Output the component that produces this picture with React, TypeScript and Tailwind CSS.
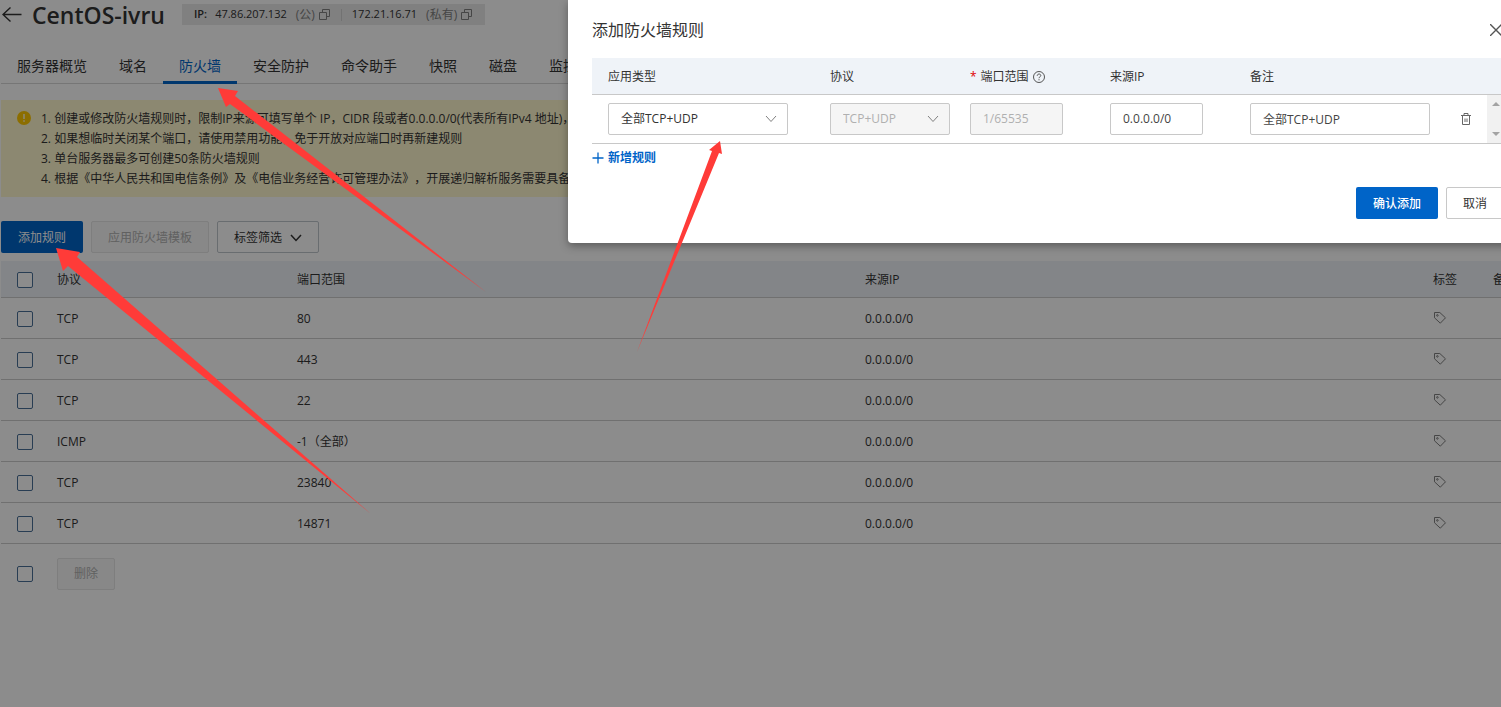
import type { ReactNode } from "react";
import clsx from "clsx";

const tabs = ["服务器概览", "域名", "防火墙", "安全防护", "命令助手", "快照", "磁盘", "监控"];

const notices = [
  "1. 创建或修改防火墙规则时，限制IP来源可填写单个 IP，CIDR 段或者0.0.0.0/0(代表所有IPv4 地址)，不支持IPv6",
  "2. 如果想临时关闭某个端口，请使用禁用功能，免于开放对应端口时再新建规则",
  "3. 单台服务器最多可创建50条防火墙规则",
  "4. 根据《中华人民共和国电信条例》及《电信业务经营许可管理办法》，开展递归解析服务需要具备相关资质",
];

const rules = [
  { protocol: "TCP", port: "80", source: "0.0.0.0/0" },
  { protocol: "TCP", port: "443", source: "0.0.0.0/0" },
  { protocol: "TCP", port: "22", source: "0.0.0.0/0" },
  { protocol: "ICMP", port: "-1（全部）", source: "0.0.0.0/0" },
  { protocol: "TCP", port: "23840", source: "0.0.0.0/0" },
  { protocol: "TCP", port: "14871", source: "0.0.0.0/0" },
];

function CopyIcon() {
  return (
    <svg className="size-3" viewBox="0 0 12 12" fill="none" stroke="#808080">
      <path d="M.5 3.5h7v7h-7zM3.5 3V.5h7v7H8" />
    </svg>
  );
}

function Chevron({ className }: { className: string }) {
  return (
    <svg className={clsx("pointer-events-none h-2 w-3", className)} viewBox="0 0 12 8" fill="none" stroke="currentColor">
      <path d="M1 1l5 5.5L11 1" />
    </svg>
  );
}

function TagIcon() {
  return (
    <svg className="size-3.5" viewBox="0 0 14 14" fill="none" stroke="#808080">
      <path d="M1.500 1.500h5.300l5.700 5.300-5.200 5.400-5.800-5.400z" />
      <circle cx="4.400" cy="4.400" r=".8" />
    </svg>
  );
}

function Checkbox({ label }: { label: string }) {
  return (
    <input
      type="checkbox"
      aria-label={label}
      className="block size-4 appearance-none rounded-[2px] border border-[#4a6f98] bg-white"
    />
  );
}

function Select({ label, value, disabled }: { label: string; value: string; disabled?: boolean }) {
  return (
    <div className="relative">
      <select
        aria-label={label}
        disabled={disabled}
        className="block h-8 w-full appearance-none rounded-[2px] border border-[#c8c8c8] bg-white px-3 text-[#333] opacity-100 disabled:bg-[#f5f5f5] disabled:text-[#b0b0b0]"
      >
        <option>{value}</option>
      </select>
      <Chevron className="absolute top-3 right-[11px] text-[#808080]" />
    </div>
  );
}

function TextBox({ label, value, disabled }: { label: string; value: string; disabled?: boolean }) {
  return (
    <input
      aria-label={label}
      defaultValue={value}
      disabled={disabled}
      className="block h-8 w-full rounded-[2px] border border-[#c8c8c8] bg-white px-3 text-[#444] disabled:bg-[#f5f5f5] disabled:text-[#b0b0b0]"
    />
  );
}

function IpItem({ ip, kind }: { ip: string; kind: string }) {
  return (
    <span className="flex items-center">
      <span>{ip}</span>
      <span className="ml-[9px] text-xs text-[#808080]">({kind})</span>
      <button aria-label={"复制 " + ip} className="ml-1">
        <CopyIcon />
      </button>
    </span>
  );
}

function Header() {
  return (
    <header className="flex h-[50px] items-start">
      <a href="#back" aria-label="返回" className="ml-[2px] pt-[7px]">
        <svg className="h-4 w-5" viewBox="0 0 20 16" fill="none" stroke="#333" strokeWidth="1.4">
          <path d="M19.500 7.500H1M8.500.5L1 7.500l7.500 7" />
        </svg>
      </a>
      <h1 className="ml-[10px] w-[150px] text-[23px] leading-[30px] font-semibold whitespace-nowrap text-[#333]">
        CentOS-ivru
      </h1>
      <div className="mt-1 flex h-[21px] items-center bg-[#e9e9e9] px-3 text-[11px] text-[#333]">
        <span className="mr-2 font-semibold">IP:</span>
        <IpItem ip="47.86.207.132" kind="公" />
        <span className="mx-[10px] h-3 w-px bg-[#d0d0d0]" />
        <IpItem ip="172.21.16.71" kind="私有" />
      </div>
    </header>
  );
}

function Tabs() {
  return (
    <nav className="ml-px flex h-[34px] border-b border-[#d8d8d8] text-sm whitespace-nowrap">
      {tabs.map((tab) => (
        <a
          key={tab}
          href={"#" + tab}
          className={clsx(
            "h-[34px] px-4 leading-8",
            tab === "防火墙" ? "border-b-3 border-[#0064c8] text-[#0064c8]" : "text-[#333]",
          )}
        >
          {tab}
        </a>
      ))}
    </nav>
  );
}

function Notice() {
  return (
    <section className="mt-4 ml-px flex h-[97px] overflow-hidden bg-[#fff7ce] pt-[9px] pl-4 text-[#333]">
      <svg className="mt-[2px] size-3.5 shrink-0" viewBox="0 0 14 14">
        <circle cx="7" cy="7" r="7" fill="#ffc900" />
        <path d="M6.2 3h1.6v5H6.2zM6.2 9.2h1.6v1.6H6.2z" fill="#fff7ce" />
      </svg>
      <ul className="ml-[10px] [text-spacing-trim:space-all]">
        {notices.map((text) => (
          <li key={text} className="leading-5 whitespace-nowrap">
            {text}
          </li>
        ))}
      </ul>
    </section>
  );
}

function Toolbar() {
  return (
    <div className="mt-6 ml-px flex gap-2">
      <button className="h-8 rounded-[2px] bg-[#0064c8] px-[17px] pt-0.5 text-white">添加规则</button>
      <button disabled className="h-8 rounded-[2px] border border-[#e5e5e5] bg-[#f7f7f7] px-4 pt-0.5 text-[#b0b0b0]">
        应用防火墙模板
      </button>
      <button className="flex h-8 items-center gap-2 rounded-[2px] border border-[#c0c6cc] px-4 pt-0.5 text-[#333]">
        标签筛选
        <Chevron className="stroke-[1.5]" />
      </button>
    </div>
  );
}

function RulesTable() {
  return (
    <table className="mt-2 ml-px w-[calc(100%+35px)] table-fixed border-collapse text-left text-[#333]">
      <colgroup>
        <col className="w-10" />
        <col className="w-60" />
        <col />
        <col />
        <col className="w-[60px]" />
        <col className="w-[60px]" />
      </colgroup>
      <thead>
        <tr className="h-9 border-b border-[#ccc] bg-[#eff3f8]">
          <th className="pt-0.5 pl-4">
            <Checkbox label="全选" />
          </th>
          {["协议", "端口范围", "来源IP", "标签", "备注"].map((name) => (
            <th key={name} className="pt-0.5 pl-4 font-normal whitespace-nowrap">
              {name}
            </th>
          ))}
        </tr>
      </thead>
      <tbody>
        {rules.map((rule) => (
          <tr key={rule.port} className="h-[41px] border-b border-[#ccc]">
            <td className="pt-0.5 pl-4">
              <Checkbox label={"选择 " + rule.port} />
            </td>
            <td className="pt-0.5 pl-4">{rule.protocol}</td>
            <td className="pt-0.5 pl-4">{rule.port}</td>
            <td className="pt-0.5 pl-4">{rule.source}</td>
            <td className="pl-4">
              <button aria-label="编辑标签" className="block">
                <TagIcon />
              </button>
            </td>
            <td />
          </tr>
        ))}
      </tbody>
    </table>
  );
}

function Th({ children }: { children?: ReactNode }) {
  return <th className="pt-0.5 pl-4 font-normal whitespace-nowrap">{children}</th>;
}

function AddRuleDialog() {
  return (
    <div
      role="dialog"
      aria-labelledby="add-rule-title"
      className="absolute top-0 -right-[27px] w-[960px] rounded-b bg-white px-6 pb-6 text-[#333] shadow-[0_3px_8px_rgba(0,0,0,0.35)]"
    >
      <div className="flex h-[58px] items-center justify-between pt-0.5">
        <h2 id="add-rule-title" className="text-base">
          添加防火墙规则
        </h2>
        <button aria-label="关闭" className="mr-[2px]">
          <svg className="size-3" viewBox="0 0 12 12" stroke="#555" strokeWidth="1.4">
            <path d="M0 0l12 12M12 0L0 12" />
          </svg>
        </button>
      </div>

      <table className="w-full table-fixed border-collapse text-left">
        <colgroup>
          <col className="w-[222px]" />
          <col className="w-[140px]" />
          <col className="w-[140px]" />
          <col className="w-[140px]" />
          <col className="w-[200px]" />
          <col />
          <col className="w-[17px]" />
        </colgroup>
        <thead>
          <tr className="h-9 border-b border-[#c8c8c8] bg-[#eff3f8]">
            <Th>应用类型</Th>
            <Th>协议</Th>
            <Th>
              <span className="flex items-center gap-1">
                <span className="text-[#e00000]">*</span>
                端口范围
                <svg className="size-3" viewBox="0 0 12 12" fill="none" stroke="#555">
                  <circle cx="6" cy="6" r="5.5" />
                  <path d="M4.2 4.8c0-2.4 3.6-2.3 3.6-.2C7.8 5.800 6 5.800 6 7.200M6 8.200v1.100" />
                </svg>
              </span>
            </Th>
            <Th>来源IP</Th>
            <Th>备注</Th>
            <Th />
            <Th />
          </tr>
        </thead>
        <tbody>
          <tr className="h-[49px] border-b border-[#c8c8c8]">
            <td className="pr-[26px] pl-4">
              <Select label="应用类型" value="全部TCP+UDP" />
            </td>
            <td className="pr-1 pl-4">
              <Select label="协议" value="TCP+UDP" disabled />
            </td>
            <td className="pr-[31px] pl-4">
              <TextBox label="端口范围" value="1/65535" disabled />
            </td>
            <td className="pr-[31px] pl-4">
              <TextBox label="来源IP" value="0.0.0.0/0" />
            </td>
            <td className="pr-1 pl-4">
              <TextBox label="备注" value="全部TCP+UDP" />
            </td>
            <td className="pl-[27px]">
              <button aria-label="删除规则" className="block">
                <svg className="h-3 w-2.5" viewBox="0 0 10 12" fill="none" stroke="#666">
                  <path d="M0 2.500h10M3 2V.5h4V2M1.500 3v8.500h7V3M4 5.500v3.500M6 5.500v3.500" />
                </svg>
              </button>
            </td>
            <td className="bg-[#f1f1f1]">
              <div className="flex h-12 flex-col items-center justify-between py-[7px]">
                <svg className="h-1 w-2" viewBox="0 0 8 4" fill="#a3a3a3">
                  <path d="M0 4l4-4 4 4z" />
                </svg>
                <svg className="h-1 w-2" viewBox="0 0 8 4" fill="#a3a3a3">
                  <path d="M0 0l4 4 4-4z" />
                </svg>
              </div>
            </td>
          </tr>
        </tbody>
      </table>

      <button className="mt-1 flex h-5 items-center gap-1 font-bold text-[#0064c8]">
        <svg className="size-3" viewBox="0 0 12 12" stroke="currentColor" strokeWidth="1.3">
          <path d="M6 .5v11M.5 6h11" />
        </svg>
        新增规则
      </button>

      <div className="mt-[19px] flex justify-end gap-2">
        <button className="h-8 rounded-[2px] bg-[#0064c8] px-[17px] pt-0.5 font-medium text-white">确认添加</button>
        <button className="h-8 rounded-[2px] border border-[#c8c8c8] px-4 pt-0.5">取消</button>
      </div>
    </div>
  );
}

// red pointers: firewall tab, add button, type select
function Arrows() {
  return (
    <svg className="pointer-events-none absolute top-0 left-0 h-[520px] w-[760px]" viewBox="0 0 760 520" fill="#ff3b38">
      <path d="M218 88l20 3-3 5L486 292 230 104l-4 3z" />
      <path d="M56 248l24 4-3 5L371 514 68 266l-5 5z" />
      <path d="M720 141l2 13-3-1L637 352 712 151l-3-1z" />
    </svg>
  );
}

export default function App() {
  return (
    <div className="relative min-h-screen overflow-hidden bg-white font-['Open_Sans','Noto_Sans_CJK_SC',sans-serif] text-xs">
      <Header />
      <Tabs />
      <Notice />
      <Toolbar />
      <RulesTable />
      <div className="mt-[14px] flex items-center gap-6 pl-[17px]">
        <Checkbox label="全选本页" />
        <button disabled className="h-8 rounded-[2px] border border-[#e5e5e5] bg-[#f7f7f7] px-4 text-[#b0b0b0]">
          删除
        </button>
      </div>

      <div className="absolute inset-0 bg-black/45" />
      <AddRuleDialog />
      <Arrows />
    </div>
  );
}
